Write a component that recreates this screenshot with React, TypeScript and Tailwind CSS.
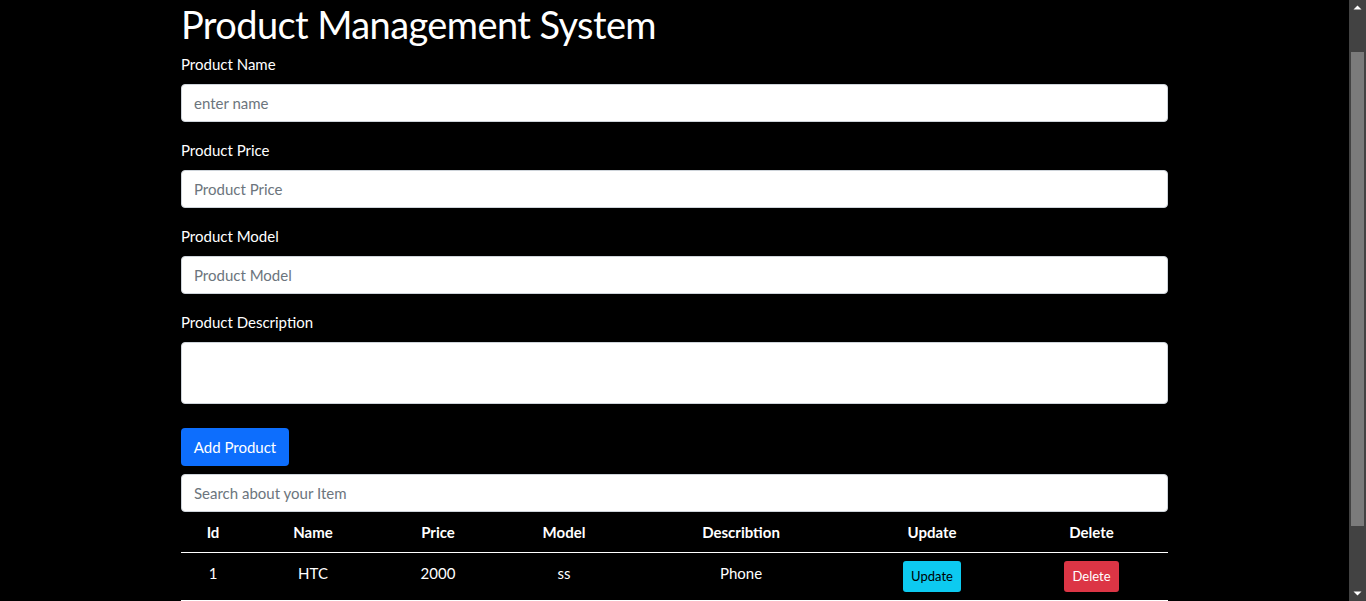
const fields = [
  { label: "Product Name", placeholder: "enter name" },
  { label: "Product Price", placeholder: "Product Price" },
  { label: "Product Model", placeholder: "Product Model" },
];

const columns = [
  { title: "Id", w: "w-[64px]" },
  { title: "Name", w: "w-[136px]" },
  { title: "Price", w: "w-[114px]" },
  { title: "Model", w: "w-[138px]" },
  { title: "Describtion", w: "w-[216px]" },
  { title: "Update", w: "w-[166px]" },
  { title: "Delete", w: "w-[153px]" },
];

const products = [{ id: 1, name: "HTC", price: 2000, model: "ss", desc: "Phone" }];

export default function App() {
  return (
    <div
      className="flex h-[601px] overflow-hidden bg-black text-white"
      style={{ fontFamily: "Lato, 'Open Sans', sans-serif" }}
    >
      <div className="flex-1">
        <div className="mx-auto w-[987px]">
          <h1 className="mb-1 text-[38px] leading-[48px] font-normal tracking-[-0.6px]">Product Management System</h1>

          {fields.map((f, index) => (
            <div className="mb-4" key={index}>
              <label className="mb-2 block text-[15px] leading-6">{f.label}</label>
              <input
                className="block h-[38px] w-full rounded-[4px] border border-[#ced4da] bg-white px-3 text-[15px] text-black placeholder:text-[#6c757d] outline-none"
                placeholder={f.placeholder}
              />
            </div>
          ))}

          <div className="mb-6">
            <label className="mb-2 block text-[15px] leading-6">Product Description</label>
            <textarea className="block h-[62px] w-full resize-none rounded-[4px] border border-[#ced4da] bg-white px-3 py-1.5 text-[15px] text-black outline-none" />
          </div>

          <button className="mb-2 block h-[38px] w-[108px] rounded-[4px] bg-[#0d6efd] text-[15px] text-white">
            Add Product
          </button>

          <input
            className="block h-[38px] w-full rounded-[4px] border border-[#ced4da] bg-white px-3 text-[15px] text-black placeholder:text-[#6c757d] outline-none"
            placeholder="Search about your Item"
          />

          <table className="w-full table-fixed border-collapse">
            <thead>
              <tr className="border-b border-white">
                {columns.map((c, index) => (
                  <th className={`${c.w} px-2 py-2 text-center text-[15px] leading-6 font-bold`} key={index}>
                    {c.title}
                  </th>
                ))}
              </tr>
            </thead>
            <tbody>
              {products.map((p) => (
                <tr className="border-b border-white" key={p.id}>
                  <td className="px-2 py-2 text-center align-top text-[15px] leading-6">{p.id}</td>
                  <td className="px-2 py-2 text-center align-top text-[15px] leading-6">{p.name}</td>
                  <td className="px-2 py-2 text-center align-top text-[15px] leading-6">{p.price}</td>
                  <td className="px-2 py-2 text-center align-top text-[15px] leading-6">{p.model}</td>
                  <td className="px-2 py-2 text-center align-top text-[15px] leading-6">{p.desc}</td>
                  <td className="px-2 py-2 text-center align-top">
                    <button className="h-[31px] rounded-[3px] bg-[#0dcaf0] px-2 text-[13px] text-black">Update</button>
                  </td>
                  <td className="px-2 py-2 text-center align-top">
                    <button className="h-[31px] rounded-[3px] bg-[#dc3545] px-2 text-[13px] text-white">Delete</button>
                  </td>
                </tr>
              ))}
            </tbody>
          </table>
        </div>
      </div>

      <div className="flex w-[17px] flex-col items-center bg-[#424242]">
        <svg width="9" height="17" viewBox="0 0 9 17" className="shrink-0">
          <path d="M0.5 9.5 L4.5 5.5 L8.5 9.5 Z" fill="#ffffff" />
        </svg>
        <div className="mt-[35px] h-[474px] w-[13px] bg-[#7b7b7b]" />
        <div className="flex-1" />
        <svg width="9" height="17" viewBox="0 0 9 17" className="shrink-0">
          <path d="M0.5 7.5 L4.5 11.5 L8.5 7.5 Z" fill="#ffffff" />
        </svg>
      </div>
    </div>
  );
}
